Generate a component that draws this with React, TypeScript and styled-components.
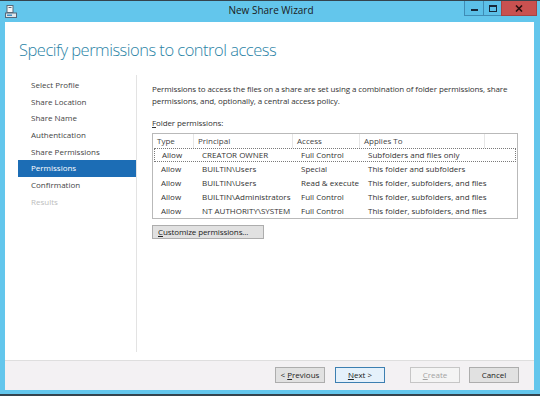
import React from 'react';
import styled, { createGlobalStyle, css } from 'styled-components';

const GlobalStyle = createGlobalStyle`
  html, body {
    margin: 0;
    padding: 0;
    background: #34444e;
  }
  body {
    font-family: "Open Sans", "Noto Sans", sans-serif;
    color: #333;
  }
`;

const Window = styled.div`
  width: 540px;
  height: 393px;
  margin-top: 1px;
  background: #63c6ec;
  display: flex;
  flex-direction: column;
  box-sizing: border-box;
`;

const TitleBar = styled.div`
  height: 21px;
  display: grid;
  grid-template-columns: 1fr auto 1fr;
  align-items: start;
  padding: 0 3px 0 5px;
`;

const AppIcon = styled.svg`
  width: 12px;
  height: 13px;
  margin-top: 3px;
`;

const Caption = styled.div`
  font-size: 10px;
  line-height: 21px;
  color: #1a1a1a;
  margin-top: -1px;
`;

const CaptionButtons = styled.div`
  display: flex;
  justify-content: flex-end;
`;

const CaptionButton = styled.div<{ $close?: boolean; $w: number }>`
  width: ${p => p.$w}px;
  height: 15px;
  box-sizing: border-box;
  display: flex;
  align-items: center;
  justify-content: center;
  border: 1px solid #3f8cb5;
  border-top: none;
  background: #5cc0e8;
  margin-left: -1px;
  ${p =>
    p.$close &&
    css`
      background: #c95150;
      border-color: #a74343;
    `}
`;

const Frame = styled.div`
  flex: 1;
  margin: 0 6px 4px 5px;
  background: #ffffff;
  display: flex;
  flex-direction: column;
`;

const Header = styled.div`
  height: 51px;
  padding: 17px 0 0 14px;
  box-sizing: border-box;
`;

const Heading = styled.h1`
  margin: 0;
  font-weight: 300;
  font-size: 16.5px;
  line-height: 22px;
  letter-spacing: -0.5px;
  color: #2b83a6;
`;

const Body = styled.div`
  flex: 1;
  display: flex;
  padding: 2px 0 8px;
`;

const Nav = styled.nav`
  width: 132px;
  border-right: 1px solid #e3e3e3;
  padding: 2px 0 0 13px;
  box-sizing: border-box;
`;

const NavItem = styled.div<{ $active?: boolean; $disabled?: boolean }>`
  height: 16.7px;
  line-height: 16.7px;
  padding-left: 13px;
  font-size: 8px;
  color: #444;
  ${p =>
    p.$active &&
    css`
      background: #1c6db5;
      color: #ffffff;
    `}
  ${p =>
    p.$disabled &&
    css`
      color: #bdbdbd;
    `}
`;

const Content = styled.section`
  flex: 1;
  padding: 8px 15px 0 15px;
  font-size: 8px;
  letter-spacing: -0.1px;
  color: #333;
`;

const Paragraph = styled.p`
  margin: 0;
  line-height: 12px;
`;

const Label = styled.div`
  margin-top: 10px;
  line-height: 12px;
`;

const Table = styled.div`
  margin-top: 4px;
  border: 1px solid #b9b9b9;
  width: 366px;
  box-sizing: border-box;
  letter-spacing: 0;
`;

const COLS = '41px 99px 67px 125px 32px';

const HeaderRow = styled.div`
  display: grid;
  grid-template-columns: ${COLS};
  height: 14px;
  line-height: 14px;
  color: #444;
`;

const HeaderCell = styled.div`
  padding-left: 4px;
  border-right: 1px solid #e6e6e6;
  &:last-child {
    border-right: none;
  }
`;

const Row = styled.div<{ $focused?: boolean }>`
  display: grid;
  grid-template-columns: ${COLS};
  height: 14px;
  line-height: 14px;
  color: #333;
  ${p =>
    p.$focused &&
    css`
      outline: 1px dotted #7a7a7a;
      outline-offset: -1px;
      margin: 0 1px;
      grid-template-columns: 40px 99px 67px 125px 31px;
    `}
`;

const Cell = styled.div`
  padding-left: 8px;
  white-space: nowrap;
`;

const Button = styled.button<{ $default?: boolean; $w?: number }>`
  font-family: inherit;
  font-size: 8px;
  height: 16px;
  width: ${p => (p.$w ? `${p.$w}px` : 'auto')};
  padding: 0;
  white-space: nowrap;
  background: #e1e1e1;
  border: 1px solid #adadad;
  color: #222;
  line-height: 14px;
  box-sizing: border-box;
  ${p =>
    p.$default &&
    css`
      background: #e5f1fb;
      border-color: #3c7fb1;
    `}
  &:disabled {
    background: #f4f4f4;
    border-color: #c6c6c6;
    color: #a3a3a3;
  }
`;

const CustomizeButton = styled(Button)`
  margin-top: 6px;
  height: 14px;
  line-height: 12px;
  text-align: left;
  padding-left: 5px;
  letter-spacing: -0.1px;
`;

const Footer = styled.div`
  height: 30px;
  border-top: 1px solid #dedede;
  background: #f3f1f3;
  display: flex;
  align-items: flex-start;
  justify-content: flex-end;
  padding: 6px 15px 0 0;
  box-sizing: border-box;
`;

const FooterGroup = styled.div<{ $gap: number }>`
  display: flex;
  gap: ${p => p.$gap}px;
  margin-left: 25px;
`;

const U = styled.span`
  text-decoration: underline;
`;

const steps = [
  'Select Profile',
  'Share Location',
  'Share Name',
  'Authentication',
  'Share Permissions',
  'Permissions',
  'Confirmation',
  'Results',
];

const rows = [
  ['Allow', 'CREATOR OWNER', 'Full Control', 'Subfolders and files only'],
  ['Allow', 'BUILTIN\\Users', 'Special', 'This folder and subfolders'],
  ['Allow', 'BUILTIN\\Users', 'Read & execute', 'This folder, subfolders, and files'],
  ['Allow', 'BUILTIN\\Administrators', 'Full Control', 'This folder, subfolders, and files'],
  ['Allow', 'NT AUTHORITY\\SYSTEM', 'Full Control', 'This folder, subfolders, and files'],
];

const App = () => (
  <>
    <GlobalStyle />
    <Window>
      <TitleBar>
        <div>
          <AppIcon viewBox="0 0 12 13">
            <rect x="2" y="0.5" width="6" height="7" fill="#f4f6f8" stroke="#5a6a78" strokeWidth="1" />
            <rect x="3.5" y="2" width="3" height="1" fill="#5a6a78" />
            <rect x="0.5" y="8" width="11" height="4.5" fill="#dfe6ec" stroke="#56687a" strokeWidth="1" />
            <rect x="2" y="9.5" width="5" height="1.5" fill="#3d8fc4" />
          </AppIcon>
        </div>
        <Caption>New Share Wizard</Caption>
        <CaptionButtons>
          <CaptionButton $w={20}>
            <svg width="7" height="7" viewBox="0 0 7 7">
              <rect x="0" y="4" width="7" height="2" fill="#18283a" />
            </svg>
          </CaptionButton>
          <CaptionButton $w={19}>
            <svg width="8" height="7" viewBox="0 0 8 7">
              <rect x="0.5" y="0.5" width="7" height="6" fill="none" stroke="#18283a" strokeWidth="1" />
              <rect x="0" y="0" width="8" height="2" fill="#18283a" />
            </svg>
          </CaptionButton>
          <CaptionButton $w={36} $close>
            <svg width="8" height="7" viewBox="0 0 8 7">
              <path d="M1 0.5 L7 6.5 M7 0.5 L1 6.5" stroke="#2a1010" strokeWidth="1.6" />
            </svg>
          </CaptionButton>
        </CaptionButtons>
      </TitleBar>
      <Frame>
        <Header>
          <Heading>Specify permissions to control access</Heading>
        </Header>
        <Body>
          <Nav>
            {steps.map(s => (
              <NavItem key={s} $active={s === 'Permissions'} $disabled={s === 'Results'}>
                {s}
              </NavItem>
            ))}
          </Nav>
          <Content>
            <Paragraph>
              Permissions to access the files on a share are set using a combination of folder permissions, share
              permissions, and, optionally, a central access policy.
            </Paragraph>
            <Label>
              <U>F</U>older permissions:
            </Label>
            <Table>
              <HeaderRow>
                <HeaderCell>Type</HeaderCell>
                <HeaderCell>Principal</HeaderCell>
                <HeaderCell>Access</HeaderCell>
                <HeaderCell>Applies To</HeaderCell>
                <HeaderCell />
              </HeaderRow>
              {rows.map((r, i) => (
                <Row key={i} $focused={i === 0}>
                  {r.map((c, j) => (
                    <Cell key={j}>{c}</Cell>
                  ))}
                </Row>
              ))}
            </Table>
            <CustomizeButton $w={112}>
              <U>C</U>ustomize permissions...
            </CustomizeButton>
          </Content>
        </Body>
        <Footer>
          <FooterGroup $gap={10}>
            <Button $w={50}>
              &lt; <U>P</U>revious
            </Button>
            <Button $w={50} $default>
              <U>N</U>ext &gt;
            </Button>
          </FooterGroup>
          <FooterGroup $gap={9}>
            <Button $w={50} disabled>
              <U>C</U>reate
            </Button>
            <Button $w={50}>Cancel</Button>
          </FooterGroup>
        </Footer>
      </Frame>
    </Window>
  </>
);

export default App;
